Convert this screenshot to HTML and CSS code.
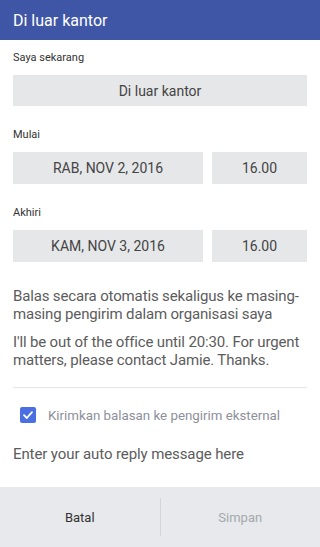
FILE: index.html
```html
<!DOCTYPE html>
<html>
<head>
<meta charset="utf-8">
<link rel="stylesheet" href="styles.css">
</head>
<body>
<div class="app">
  <header class="topbar">Di luar kantor</header>
  <main class="content">
    <div class="label first">Saya sekarang</div>
    <div class="box full">Di luar kantor</div>
    <div class="label">Mulai</div>
    <div class="row">
      <div class="box date">RAB, NOV 2, 2016</div>
      <div class="box time">16.00</div>
    </div>
    <div class="label">Akhiri</div>
    <div class="row">
      <div class="box date">KAM, NOV 3, 2016</div>
      <div class="box time">16.00</div>
    </div>
    <p class="para p1">Balas secara otomatis sekaligus ke masing-masing pengirim dalam organisasi saya</p>
    <p class="para p2">I'll be out of the office until 20:30. For urgent matters, please contact Jamie. Thanks.</p>
    <div class="divider"></div>
    <div class="check-row">
      <span class="checkbox">
        <svg width="12" height="12" viewBox="0 0 12 12"><path d="M2 6.2 L4.8 9 L10 3.2" fill="none" stroke="#fff" stroke-width="1.8" stroke-linecap="round" stroke-linejoin="round"/></svg>
      </span>
      <span class="check-label">Kirimkan balasan ke pengirim eksternal</span>
    </div>
    <div class="placeholder">Enter your auto reply message here</div>
  </main>
  <footer class="bottombar">
    <div class="btn cancel">Batal</div>
    <div class="sep"></div>
    <div class="btn save">Simpan</div>
  </footer>
</div>
</body>
</html>
```

FILE: styles.css
```css
* { box-sizing: border-box; }
html, body { margin: 0; padding: 0; }
body {
  font-family: Roboto, "Noto Sans", sans-serif;
  background: #fff;
  width: 320px;
  height: 547px;
  overflow: hidden;
}
.app {
  display: flex;
  flex-direction: column;
  height: 547px;
}
.topbar {
  height: 40px;
  background: #3f56a6;
  color: #fff;
  font-size: 16px;
  padding: 0 13px;
  display: flex;
  align-items: center;
}
.content {
  flex: 1;
  padding: 0 13px;
  display: flex;
  flex-direction: column;
}
.label {
  font-size: 11px;
  color: #333;
  margin-top: 22px;
  height: 14px;
  line-height: 14px;
  margin-bottom: 10px;
}
.label.first { margin-top: 11px; }
.box {
  background: #e6e7e9;
  color: #444;
  font-size: 14px;
  display: flex;
  align-items: center;
  justify-content: center;
  height: 31px;
}
.row {
  display: flex;
  gap: 9px;
}
.box.date { width: 190px; height: 32px; }
.box.time { flex: 1; height: 32px; }
.para {
  margin: 0;
  font-size: 15px;
  letter-spacing: -0.15px;
  line-height: 18px;
  color: #5c5c5c;
}
.p1 { margin-top: 25px; }
.p2 { margin-top: 10px; }
.divider {
  height: 1px;
  background: #e6e6e6;
  margin-top: 18px;
}
.check-row {
  display: flex;
  align-items: center;
  margin-top: 19px;
  padding-left: 7px;
  height: 16px;
}
.checkbox {
  width: 16px;
  height: 16px;
  border-radius: 2px;
  background: #4b6fe0;
  display: flex;
  align-items: center;
  justify-content: center;
}
.check-label {
  margin-left: 12px;
  font-size: 13.3px;
  color: #8d909b;
}
.placeholder {
  margin-top: 22px;
  font-size: 15px;
  letter-spacing: -0.1px;
  color: #5c5c5c;
  line-height: 18px;
}
.bottombar {
  height: 60px;
  background: #e7e9ec;
  display: flex;
  align-items: center;
}
.btn {
  flex: 1;
  text-align: center;
  font-size: 13px;
}
.cancel { color: #333; }
.save { color: #a6a8ad; }
.sep {
  width: 1px;
  height: 38px;
  background: #d3d5d9;
}
```
